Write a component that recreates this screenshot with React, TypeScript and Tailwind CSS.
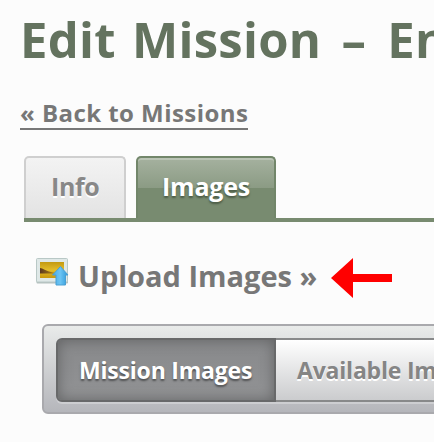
import React from "react";

function UploadIcon() {
  return (
    <svg width="34" height="30" viewBox="0 0 34 30" className="block shrink-0">
      <defs>
        <linearGradient id="photo" x1="0" y1="0" x2="0" y2="1">
          <stop offset="0" stopColor="#c39a12" />
          <stop offset="0.5" stopColor="#e3bd2a" />
          <stop offset="1" stopColor="#c9980c" />
        </linearGradient>
        <linearGradient id="hill" x1="0" y1="0" x2="1" y2="0">
          <stop offset="0" stopColor="#5a3820" />
          <stop offset="0.7" stopColor="#c0900f" />
        </linearGradient>
        <linearGradient id="up" x1="0" y1="0" x2="1" y2="0">
          <stop offset="0" stopColor="#48ace6" />
          <stop offset="0.5" stopColor="#6cc4f3" />
          <stop offset="1" stopColor="#2d98d8" />
        </linearGradient>
      </defs>
      <rect x="0.5" y="1.5" width="31.5" height="24" rx="1" fill="#b3bfbd" />
      <rect x="0.5" y="0.5" width="31" height="23.5" rx="1" fill="#dfe8e7" stroke="#b9c8c6" />
      <rect x="4" y="4" width="24" height="16" fill="url(#photo)" />
      <path d="M4 10 C7 10.5 9 12.5 13 13.5 C18 15 23 15 28 15.5 H4Z" fill="url(#hill)" />
      <path d="M24.5 8.5 L32 17 H29.5 V27 H20 V17 H16.5 Z" fill="url(#up)" stroke="#4a9fd2" strokeWidth="1" strokeLinejoin="round" />
    </svg>
  );
}

export default function App() {
  return (
    <div className="h-[442px] w-[434px] overflow-hidden bg-[#fcfcfc] pt-[9px] font-['Open_Sans',sans-serif] font-bold whitespace-nowrap text-[#777777]">
      <h1 className="ml-5 h-[60px] text-[49px] leading-[60px] tracking-[0.3px] text-[#64735f] [word-spacing:3px]">
        Edit Mission <span className="mr-[5px] ml-[4px]">–</span> En
      </h1>
      <a className="mt-[29px] ml-5 block h-8 w-[228px] border-b-2 border-[#777777] text-[24px] leading-[30px] tracking-[0.45px]">« Back to Missions</a>

      <nav className="mt-[26px] ml-6 flex h-[66px] gap-2.5 border-b-4 border-[#788b70]">
        <div className="h-[62px] w-[102px] rounded-t-[5px] border-2 border-b-0 border-[#cfcfcf] bg-linear-to-b from-[#f3f3f3] to-[#e3e3e3] pl-[25px] text-[25px] leading-[57px] tracking-[-0.4px] text-[#888888] [text-shadow:0_2px_0_#ffffff]">
          Info
        </div>
        <div className="h-[62px] w-[140px] rounded-t-[5px] border-2 border-b-0 border-[#72866a] bg-[#788b70] bg-[linear-gradient(#a5b19f,#8b9b84)] bg-[length:100%_30px] bg-no-repeat pl-6 text-[25px] leading-[57px] tracking-[-0.2px] text-white shadow-[inset_0_2px_0_#bac4b5] [text-shadow:0_2px_2px_#4b5b46]">
          Images
        </div>
      </nav>

      <div className="mt-9 ml-9 flex h-10">
        <UploadIcon />
        <span className="ml-2 w-[244px] text-[29px] leading-[35px]">Upload Images »</span>
        <svg width="61" height="40" viewBox="0 0 61 40" className="ml-[9px] shrink-0">
          <path d="M0 20 L22 0 V16 H61 V24 H22 V40 Z" fill="#ff0000" />
        </svg>
      </div>

      <section className="mt-[26px] ml-[42px] h-[90px] w-[500px] rounded-[6px] border-2 border-[#a9a9ad] bg-linear-to-b from-[#e9ebea] to-[#b5b6bb] p-3">
        <div className="flex h-16 rounded-[6px] text-[23px] leading-[60px] shadow-[0_2px_0_#cdced1]">
          <div className="h-16 w-[220px] shrink-0 rounded-l-[6px] border-2 border-[#68696a] bg-linear-to-b from-[#88898b] to-[#929395] pl-[21px] tracking-[-0.2px] text-white shadow-[inset_0_0_14px_#626364] [text-shadow:0_2px_2px_#505152]">
            Mission Images
          </div>
          <div className="h-16 grow border-y-2 border-[#88898a] bg-linear-to-b from-white to-[#cbccce] pl-[21px] tracking-[-0.2px] text-[#858585] [text-shadow:0_2px_0_#ffffff]">
            Available Images
          </div>
        </div>
      </section>
    </div>
  );
}
